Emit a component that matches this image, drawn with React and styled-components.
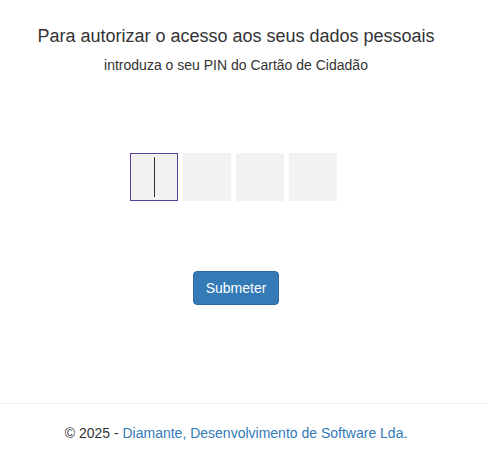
import React from "react";
import styled, { createGlobalStyle } from "styled-components";

const Global = createGlobalStyle`
  html, body { margin: 0; padding: 0; background: #fff; }
  body { font-family: "Liberation Sans", Arial, sans-serif; font-size: 14px; line-height: 1.42857; color: #333; }
  * { box-sizing: border-box; }
`;

const Main = styled.main`
  padding: 26px 14px 0 0;
  display: flex;
  flex-direction: column;
  align-items: center;
`;

const Title = styled.h1`
  margin: 0;
  font-size: 18px;
  font-weight: 400;
  line-height: 20px;
  color: #333;
`;

const Subtitle = styled.p`
  margin: 9px 0 0;
  font-size: 14px;
  line-height: 20px;
  color: #333;
`;

const PinRow = styled.div`
  display: flex;
  gap: 5px;
  margin-top: 78px;
  margin-right: 5px;
`;

const PinBox = styled.div`
  width: 48px;
  height: 48px;
  background: #f2f2f2;
  border: 1px solid ${(p) => (p.$active ? "#5b3d9c" : "#f2f2f2")};
  display: flex;
  align-items: center;
  justify-content: center;
`;

const Caret = styled.span`
  width: 1px;
  height: 40px;
  background: #333;
`;

const Button = styled.button`
  margin-top: 70px;
  font-family: inherit;
  font-size: 14px;
  line-height: 20px;
  padding: 6px 12px;
  color: #fff;
  background: #337ab7;
  border: 1px solid #2e6da4;
  border-radius: 4px;
  cursor: pointer;
`;

const Footer = styled.footer`
  margin-top: 98px;
  border-top: 1px solid #eee;
  padding: 20px 14px 20px 0;
  text-align: center;
`;

const Link = styled.a`
  color: #337ab7;
  text-decoration: none;
`;

export default function App() {
  return (
    <>
      <Global />
      <Main>
        <Title>Para autorizar o acesso aos seus dados pessoais</Title>
        <Subtitle>introduza o seu PIN do Cartão de Cidadão</Subtitle>
        <PinRow>
          <PinBox $active><Caret /></PinBox>
          <PinBox />
          <PinBox />
          <PinBox />
        </PinRow>
        <Button>Submeter</Button>
      </Main>
      <Footer>
        © 2025 - <Link href="#">Diamante, Desenvolvimento de Software Lda.</Link>
      </Footer>
    </>
  );
}
